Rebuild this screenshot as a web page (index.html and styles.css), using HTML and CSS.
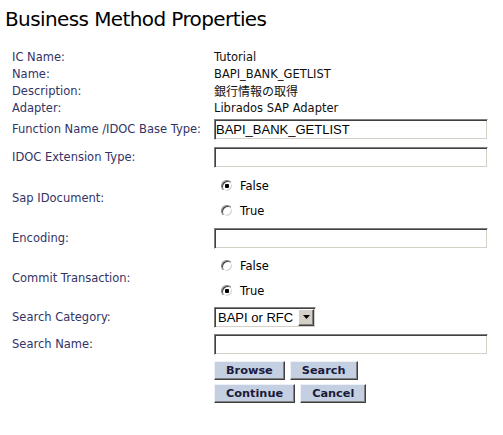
FILE: index.html
```html
<!DOCTYPE html>
<html>
<head>
<meta charset="utf-8">
<link rel="stylesheet" href="styles.css">
</head>
<body>
<h1 class="title">Business Method Properties</h1>
<form class="form">
  <div class="label">IC Name:</div><div class="value">Tutorial</div>
  <div class="label">Name:</div><div class="value">BAPI_BANK_GETLIST</div>
  <div class="label">Description:</div><div class="value cjk">銀行情報の取得</div>
  <div class="label">Adapter:</div><div class="value">Librados SAP Adapter</div>

  <div class="label">Function Name /IDOC Base Type:</div>
  <div class="ctl"><input class="field" type="text" value="BAPI_BANK_GETLIST"></div>

  <div class="label">IDOC Extension Type:</div>
  <div class="ctl"><input class="field" type="text" value=""></div>

  <div class="label">Sap IDocument:</div>
  <div class="radios">
    <label class="opt"><input class="radio" type="radio" name="sap" checked><span>False</span></label>
    <label class="opt"><input class="radio" type="radio" name="sap"><span>True</span></label>
  </div>

  <div class="label">Encoding:</div>
  <div class="ctl"><input class="field" type="text" value=""></div>

  <div class="label">Commit Transaction:</div>
  <div class="radios">
    <label class="opt"><input class="radio" type="radio" name="commit"><span>False</span></label>
    <label class="opt"><input class="radio" type="radio" name="commit" checked><span>True</span></label>
  </div>

  <div class="label">Search Category:</div>
  <div class="ctl">
    <div class="select">
      <select class="select-native"><option>BAPI or RFC</option></select>
      <span class="select-arrow"><svg width="7" height="4" viewBox="0 0 7 4"><path d="M0 0h7L3.5 4z" fill="#000"/></svg></span>
    </div>
  </div>

  <div class="label">Search Name:</div>
  <div class="ctl"><input class="field" type="text" value=""></div>

  <div class="buttons">
    <div class="btn-row"><button type="button" class="btn">Browse</button><button type="button" class="btn">Search</button></div>
    <div class="btn-row"><button type="button" class="btn">Continue</button><button type="button" class="btn">Cancel</button></div>
  </div>
</form>
</body>
</html>
```
FILE: styles.css
```css
body {
  margin: 0;
  background: #fff;
  font-family: "DejaVu Sans", Verdana, sans-serif;
  font-size: 11.5px;
  color: #000;
}
.title {
  margin: 0;
  padding: 7px 0 0 5px;
  font-size: 20px;
  line-height: 24px;
  font-weight: normal;
  letter-spacing: -0.6px;
  color: #000;
}
.form {
  display: grid;
  grid-template-columns: 202px 274px;
  grid-template-rows: 17px 17px 17px 17px 26px 30px 52px 28px 52px 26px 28px auto;
  align-items: center;
  margin: 17px 0 0 0;
  padding-left: 12px;
}
.label {
  color: #333366;
  white-space: nowrap;
}
.value {
  color: #111;
  white-space: nowrap;
}
.cjk {
  font-family: "Noto Sans CJK JP", sans-serif;
  font-size: 12px;
}
.ctl {
  display: flex;
  align-items: center;
}
.field {
  box-sizing: border-box;
  width: 274px;
  height: 21px;
  margin: 0;
  padding: 0 2px 0 1px;
  border: 1px solid;
  border-color: #808080 #fff #fff #808080;
  box-shadow: inset 1px 1px 0 #404040, inset -1px -1px 0 #d4d0c8;
  font-family: "Liberation Sans", Arial, sans-serif;
  font-size: 13px;
  color: #000;
  background: #fff;
  outline: none;
}
.radios {
  display: flex;
  flex-direction: column;
}
.opt {
  display: flex;
  align-items: center;
  height: 25px;
}
.radio {
  appearance: none;
  -webkit-appearance: none;
  box-sizing: border-box;
  width: 12px;
  height: 12px;
  margin: 0 7px 0 7px;
  border-radius: 50%;
  border: 1px solid;
  border-color: #808080 #fff #fff #808080;
  box-shadow: inset 1px 1px 0 #404040, inset -1px -1px 0 #d4d0c8;
  background: #fff;
}
.radio:checked {
  background: radial-gradient(circle, #000 0 2px, #fff 2.5px);
}
.select {
  display: flex;
  align-items: center;
  box-sizing: border-box;
  width: 102px;
  height: 21px;
  border: 1px solid;
  border-color: #808080 #fff #fff #808080;
  box-shadow: inset 1px 1px 0 #404040, inset -1px -1px 0 #d4d0c8;
  padding: 1px 1px 1px 1px;
  background: #fff;
}
.select-native {
  appearance: none;
  -webkit-appearance: none;
  flex: 1;
  min-width: 0;
  border: 0;
  padding: 0 0 0 2px;
  margin: 0;
  background: transparent;
  font-family: "Liberation Sans", Arial, sans-serif;
  font-size: 13px;
  color: #000;
  outline: none;
}
.select-arrow {
  box-sizing: border-box;
  width: 16px;
  height: 17px;
  display: flex;
  align-items: center;
  justify-content: center;
  background: #d4d0c8;
  border: 1px solid;
  border-color: #fff #404040 #404040 #fff;
  box-shadow: inset -1px -1px 0 #808080;
}
.buttons {
  grid-column: 2;
  align-self: start;
  display: flex;
  flex-direction: column;
  gap: 4px;
  padding-top: 3px;
}
.btn-row {
  display: flex;
  gap: 5px;
}
.btn {
  box-sizing: border-box;
  height: 19px;
  margin: 0;
  padding: 0 11px 0 11px;
  border: 1px solid;
  border-color: #eef2f8 #404040 #404040 #eef2f8;
  box-shadow: inset -1px -1px 0 #808080;
  background: #c4d0e2;
  font-family: "DejaVu Sans", Verdana, sans-serif;
  font-weight: bold;
  font-size: 11.3px;
  line-height: 15px;
  color: #1a1a3a;
}
```
